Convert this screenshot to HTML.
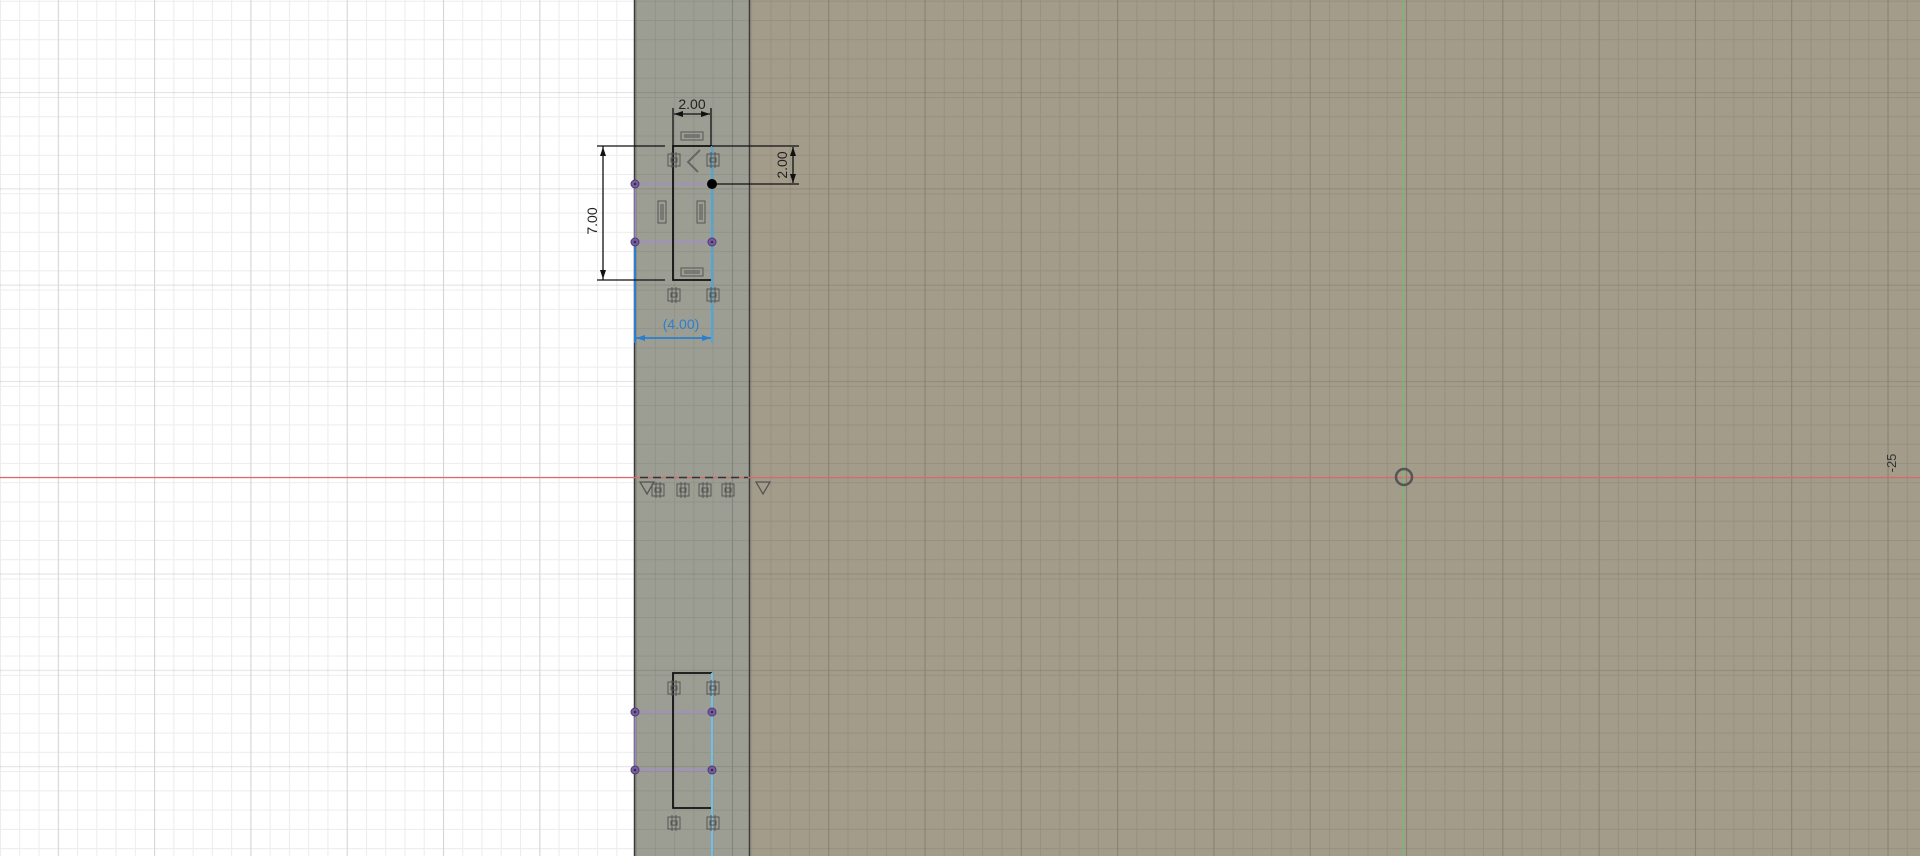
<!DOCTYPE html>
<html><head><meta charset="utf-8"><style>
html,body{margin:0;padding:0;width:1920px;height:856px;overflow:hidden;background:#fff}
svg{display:block}
text{font-family:"Liberation Sans",sans-serif}
</style></head><body>
<svg width="1920" height="856" viewBox="0 0 1920 856" xmlns="http://www.w3.org/2000/svg">
<defs>
<pattern id="minor" x="0" y="0.7" width="19.26" height="19.26" patternUnits="userSpaceOnUse">
<path d="M0 0.5H19.26M0.5 0V19.26" stroke="rgba(0,0,0,0.075)" stroke-width="1" fill="none"/>
</pattern>
<pattern id="major" x="57.8" y="92" width="96.3" height="96.3" patternUnits="userSpaceOnUse">
<path d="M0 0.5H96.3M0.5 0V96.3" stroke="rgba(0,0,0,0.1)" stroke-width="1.2" fill="none"/>
</pattern>
<g id="ci"><rect x="-6" y="-6" width="12" height="12" fill="none" stroke="#555" stroke-width="1"/><path d="M-2 -8V8M2 -8V8M-3 -2H3V2H-3Z" stroke="#555" stroke-width="1" fill="none"/></g>
<g id="hz"><rect x="-11" y="-4" width="22" height="8" fill="none" stroke="#555" stroke-width="1"/><path d="M-8 -1H8M-8 1H8" stroke="#555" stroke-width="1"/></g>
<g id="vt"><rect x="-4" y="-11" width="8" height="22" fill="none" stroke="#555" stroke-width="1"/><path d="M-1 -8V8M1 -8V8" stroke="#555" stroke-width="1"/></g>
</defs>
<rect width="1920" height="856" fill="#fff"/>
<rect x="749" y="0" width="1171" height="856" fill="#a39c8a"/>
<rect x="634" y="0" width="115" height="856" fill="#9d9e93"/>
<rect width="1920" height="856" fill="url(#minor)"/>
<rect width="1920" height="856" fill="url(#major)"/>
<line x1="634.5" y1="0" x2="634.5" y2="856" stroke="#3a3a3a" stroke-width="1.5"/>
<line x1="749.5" y1="0" x2="749.5" y2="856" stroke="#3a3a3a" stroke-width="1.5"/>
<line x1="0" y1="477.5" x2="1920" y2="477.5" stroke="#d96a6a" stroke-width="1.2"/>
<line x1="1403.5" y1="0" x2="1403.5" y2="856" stroke="#6fbf6f" stroke-width="1.2"/>
<line x1="640" y1="477.5" x2="748" y2="477.5" stroke="#333" stroke-width="1.5" stroke-dasharray="8 5"/>
<circle cx="1404" cy="477" r="8" fill="none" stroke="#555" stroke-width="2.5"/>
<text transform="translate(1896,463) rotate(-90)" font-size="13" fill="#333" text-anchor="middle">-25</text>
<rect x="635" y="184" width="77" height="58" fill="none" stroke="#a08ad8" stroke-width="1.3"/>
<rect x="635" y="712" width="77" height="58" fill="none" stroke="#a08ad8" stroke-width="1.3"/>
<path d="M712 146H673V280H712" fill="none" stroke="#111" stroke-width="1.8"/>
<path d="M712 673H673V808H712" fill="none" stroke="#111" stroke-width="1.8"/>
<line x1="712" y1="146" x2="712" y2="343" stroke="#4aa8e0" stroke-width="2"/>
<line x1="635" y1="242" x2="635" y2="343" stroke="#2a7fd0" stroke-width="2"/>
<line x1="712" y1="673" x2="712" y2="856" stroke="#6ec0ea" stroke-width="2"/>
<line x1="636" y1="338" x2="711" y2="338" stroke="#2a7fd0" stroke-width="1.8"/>
<path d="M636 338l9 -3v6z M711 338l-9 -3v6z" fill="#2a7fd0"/>
<text x="681" y="329" font-size="14" fill="#2a7fd0" text-anchor="middle">(4.00)</text>
<path d="M597 146H665M597 280H665M603 146V280" stroke="#111" stroke-width="1.3" fill="none"/>
<path d="M603 147l-3 9h6z M603 279l-3 -9h6z" fill="#111"/>
<text transform="translate(597,221) rotate(-90)" font-size="14" fill="#222" text-anchor="middle">7.00</text>
<path d="M673 108V146M711 108V146M674 114H710" stroke="#111" stroke-width="1.3" fill="none"/>
<path d="M674 114l9 -3v6z M710 114l-9 -3v6z" fill="#111"/>
<text x="692" y="109" font-size="14" fill="#222" text-anchor="middle">2.00</text>
<path d="M712 146H799M716 184H799M793 147V183" stroke="#111" stroke-width="1.3" fill="none"/>
<path d="M793 147l-3 9h6z M793 183l-3 -9h6z" fill="#111"/>
<text transform="translate(787,165) rotate(-90)" font-size="14" fill="#222" text-anchor="middle">2.00</text>
<g fill="#7a5aa8" stroke="#4a3a70" stroke-width="1">
<circle cx="635" cy="184" r="4"/><circle cx="712" cy="242" r="4"/><circle cx="635" cy="242" r="4"/>
<circle cx="635" cy="712" r="4"/><circle cx="712" cy="712" r="4"/><circle cx="635" cy="770" r="4"/><circle cx="712" cy="770" r="4"/>
</g>
<g fill="#333"><circle cx="635" cy="184" r="1.3"/><circle cx="712" cy="242" r="1.3"/><circle cx="635" cy="242" r="1.3"/><circle cx="635" cy="712" r="1.3"/><circle cx="712" cy="712" r="1.3"/><circle cx="635" cy="770" r="1.3"/><circle cx="712" cy="770" r="1.3"/></g>
<circle cx="712" cy="184" r="5" fill="#000"/>
<use href="#ci" x="674" y="160"/><use href="#ci" x="713" y="160"/>
<use href="#ci" x="674" y="295"/><use href="#ci" x="713" y="295"/>
<use href="#ci" x="674" y="688"/><use href="#ci" x="713" y="688"/>
<use href="#ci" x="674" y="823"/><use href="#ci" x="713" y="823"/>
<use href="#hz" x="692" y="136"/><use href="#hz" x="692" y="272"/>
<use href="#vt" x="662" y="212"/><use href="#vt" x="701" y="212"/>
<path d="M700 150l-12 12 10 10" fill="none" stroke="#666" stroke-width="2"/>
<use href="#ci" x="658" y="490"/><use href="#ci" x="683" y="490"/><use href="#ci" x="705" y="490"/><use href="#ci" x="728" y="490"/>
<path d="M640 482h14l-7 12z" fill="none" stroke="#555" stroke-width="1.3"/>
<path d="M756 482h14l-7 12z" fill="none" stroke="#555" stroke-width="1.3"/>
</svg>
</body></html>
